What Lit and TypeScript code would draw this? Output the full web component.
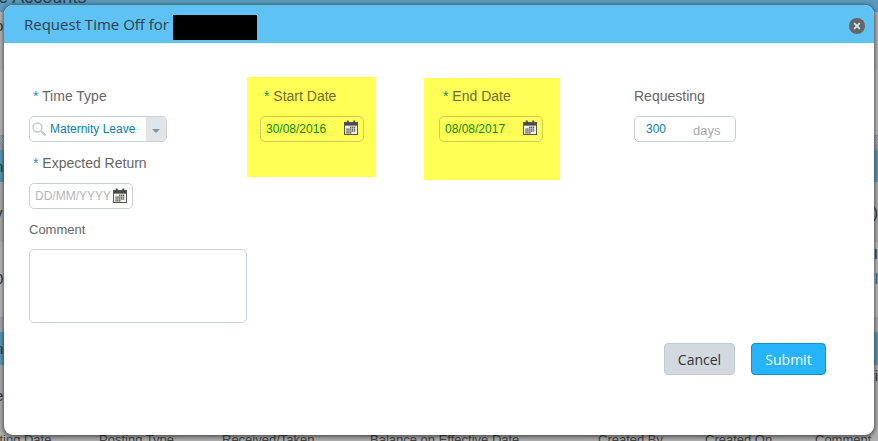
import { LitElement, html, css, svg } from "lit";
import { customElement } from "lit/decorators.js";

const calendar = () => html`<svg class="cal" width="14" height="15" viewBox="0 0 15 16" aria-hidden="true">
  <rect x="0.5" y="2.5" width="14" height="13" fill="#f4f4ea" stroke="#4a4a4a"/>
  <rect x="1" y="3" width="13" height="3" fill="#4a4a4a"/>
  <rect x="3" y="0.5" width="2" height="4" fill="#4a4a4a"/>
  <rect x="10" y="0.5" width="2" height="4" fill="#4a4a4a"/>
  ${[0, 1, 2, 3].flatMap((r) =>
    [0, 1, 2, 3, 4].map((c) =>
      r === 0 && c < 2 || r === 3 && c > 2
        ? ""
        : svg`<rect x="${2.5 + c * 2}" y="${7 + r * 2}" width="1.5" height="1.5" fill="#555"/>`
    )
  )}
</svg>`;

type Row = { h: number; cls: string; l?: string; r?: string; rc?: string };
const rows: Row[] = [
  { h: 12, cls: "blue" },
  { h: 26, cls: "g1", l: "o" },
  { h: 32, cls: "g1" },
  { h: 27, cls: "g2", l: "i" },
  { h: 26, cls: "g2", l: "i" },
  { h: 12, cls: "g2" },
  { h: 15, cls: "hatch" },
  { h: 32, cls: "blue", l: "n" },
  { h: 60, cls: "g3", l: "v", r: ")" },
  { h: 23, cls: "g2", l: "r", r: "I" },
  { h: 26, cls: "g2", l: "0", r: "l", rc: "link" },
  { h: 26, cls: "g2" },
  { h: 15, cls: "g4" },
  { h: 33, cls: "blue", l: "n" },
  { h: 20, cls: "g3", r: "i" },
  { h: 20, cls: "g3", l: "e" },
  { h: 36, cls: "g3" },
];

@customElement("app-root")
export class AppRoot extends LitElement {
  static styles = css`
    :host { display: block; width: 878px; height: 441px; position: relative; overflow: hidden;
      font-family: "Liberation Sans", Arial, sans-serif; background: #bbb; }
    .bg { display: flex; flex-direction: column; height: 441px; overflow: hidden; }
    .bgrow { display: flex; justify-content: space-between; align-items: center; flex: none;
      font-size: 15px; color: #333; overflow: hidden; }
    .bgrow span.l { margin-left: -5px; }
    .bgrow span.link { color: #0b6f99; }
    .blue { background: #5b9aba; }
    .g1 { background: #b4b4b4; }
    .g2 { background: #bbb; }
    .g3 { background: #aeaeae; }
    .g4 { background: #a9a9b0; }
    .hatch { background: repeating-linear-gradient(45deg, #8d9aa4 0 1px, #a4adb3 1px 2px); }
    .top-text { position: absolute; left: -31px; top: -13px; font-size: 18px; color: #2c3e4c; white-space: nowrap; }
    .foot { position: absolute; left: 0; top: 432px; width: 878px; height: 18px; font-size: 13px; color: #444; }
    .foot span { position: absolute; top: 0; white-space: nowrap; }

    .modal { position: absolute; left: 4px; top: 5px; width: 870px; height: 430px; background: #fff;
      border-radius: 9px; box-shadow: 0 1px 4px 1px rgba(0,0,0,.55); display: flex; flex-direction: column; overflow: hidden; }
    .head { height: 38px; flex: none; background: #5fc2f5; display: flex; align-items: center; padding: 0 9px 0 20px;
      font-family: "Open Sans", sans-serif; font-size: 15px; color: #2b3f50; }
    .redact { width: 84px; height: 25px; background: #000; margin-left: 4px; margin-top: 7px; }
    .close { margin-left: auto; margin-top: 4px; width: 16px; height: 16px; display: block; }

    .body { display: flex; padding-left: 25px; align-items: flex-start; }
    .col1 { width: 218px; flex: none; padding-top: 44px; display: flex; flex-direction: column; }
    .lab { display: block; font-size: 14px; line-height: 18px; color: #666; white-space: nowrap; }
    .star { color: #1b8fc4; }
    .col1 .lab { padding-left: 4px; }
    .col1 .plain { padding-left: 0; font-size: 13px; margin-top: 12px; }
    .box { box-sizing: border-box; height: 26px; border: 1px solid #c6d0d7; border-radius: 5px; display: flex; align-items: center;
      font-size: 12px; background: #fff; position: relative; white-space: nowrap; }
    .select { width: 138px; margin-top: 11px; overflow: hidden; color: #0a7fae; }
    .select svg.mag { margin: 0 3px 0 1px; flex: none; }
    .drop { margin-left: auto; align-self: stretch; width: 20px; background: #e2e5e8; display: flex; align-items: center; justify-content: center; }
    .caret { width: 0; height: 0; border-left: 4px solid transparent; border-right: 4px solid transparent; border-top: 4px solid #8a9299; margin-top: 3px; }
    .date-ph { width: 104px; margin-top: 11px; padding-left: 5px; color: #b5b5b5; }
    .date-ph .cal { position: absolute; left: 83px; top: 4px; }
    .exp { margin-top: 12px; }
    .area { box-sizing: border-box; width: 218px; height: 74px; margin-top: 10px; border: 1px solid #c6d0d7; border-radius: 5px; }

    .hl { background: #ffff55; flex: none; box-sizing: border-box; }
    .hl1 { width: 129px; height: 100px; margin-top: 34px; padding: 10px 0 0 13px; }
    .hl2 { width: 136px; height: 102px; margin-top: 35px; margin-left: 48px; padding: 9px 0 0 15px; }
    .hl .lab { color: #6d6d38; padding-left: 4px; }
    .hl .star { color: #0f8a6e; }
    .date { width: 104px; margin-top: 11px; padding-left: 5px; color: #0a8a12; background: transparent; border-color: #c9cd5c; }
    .date .cal { position: absolute; right: 5px; top: 3px; }

    .req { margin-left: 74px; margin-top: 44px; flex: none; }
    .req .box { width: 102px; margin-top: 11px; color: #0a7fae; padding-left: 11px; }
    .req .days { color: #aaa; margin-left: 27px; margin-top: 2px; font-size: 13px; }

    .foot-btns { display: flex; justify-content: flex-end; gap: 16px; padding: 20px 48px 0 0; }
    button { box-sizing: border-box; height: 32px; border-radius: 4px; font-family: "Open Sans", sans-serif; font-size: 14px; padding: 0; }
    .cancel { width: 71px; background: #d2d9df; border: 1px solid #c1cad1; color: #333; }
    .submit { width: 75px; background: #25b4fd; border: 1px solid #0e8fd6; color: #fff; }
  `;

  private search() {
    return html`<svg class="mag" width="16" height="16" viewBox="0 0 16 16" fill="none" stroke="#c4c8cb" aria-hidden="true">
      <circle cx="6.5" cy="6.5" r="4.5" stroke-width="1.4"/><path d="M10 10l4.5 4.5" stroke-width="2"/></svg>`;
  }

  render() {
    return html`
      <div class="bg">
        ${rows.map((r) => html`<div class="bgrow ${r.cls}" style="height:${r.h}px">
          <span class="l">${r.l ?? ""}</span><span class="r ${r.rc ?? ""}">${r.r ?? ""}</span></div>`)}
      </div>
      <div class="top-text">Time Accounts</div>
      <div class="foot">
        <span style="left:-23px">Posting Date</span><span style="left:99px">Posting Type</span>
        <span style="left:222px">Received/Taken</span><span style="left:370px">Balance on Effective Date</span>
        <span style="left:598px">Created By</span><span style="left:705px">Created On</span><span style="left:815px">Comment</span>
      </div>
      <div class="modal">
        <div class="head">
          <span>Request Time Off for</span><div class="redact"></div>
          <svg class="close" viewBox="0 0 16 16" aria-hidden="true"><circle cx="8" cy="8" r="8" fill="#666"/>
            <path d="M5.2 5.2l5.6 5.6M10.8 5.2l-5.6 5.6" stroke="#cfe9f7" stroke-width="1.8"/></svg>
        </div>
        <div class="body">
          <div class="col1">
            <div class="lab"><span class="star">*</span> Time Type</div>
            <div class="box select">${this.search()}<span>Maternity Leave</span><div class="drop"><div class="caret"></div></div></div>
            <div class="lab exp"><span class="star">*</span> Expected Return</div>
            <div class="box date-ph">DD/MM/YYYY${calendar()}</div>
            <div class="lab plain">Comment</div>
            <div class="area"></div>
          </div>
          <div class="hl hl1">
            <div class="lab"><span class="star">*</span> Start Date</div>
            <div class="box date">30/08/2016${calendar()}</div>
          </div>
          <div class="hl hl2">
            <div class="lab"><span class="star">*</span> End Date</div>
            <div class="box date">08/08/2017${calendar()}</div>
          </div>
          <div class="req">
            <div class="lab">Requesting</div>
            <div class="box">300<span class="days">days</span></div>
          </div>
        </div>
        <div class="foot-btns">
          <button class="cancel">Cancel</button><button class="submit">Submit</button>
        </div>
      </div>
    `;
  }
}
